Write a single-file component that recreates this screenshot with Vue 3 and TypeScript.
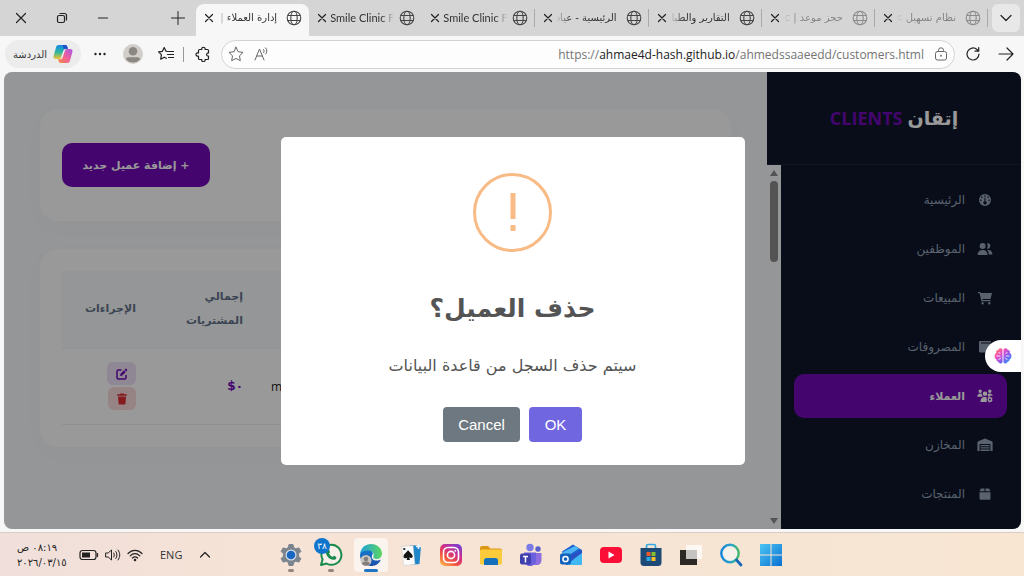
<script setup lang="ts">
interface Tab {
  title: string
  dir: 'rtl' | 'ltr'
  active?: boolean
  faded?: boolean
  divider?: boolean
}

interface NavItem {
  label: string
  path: string
  active?: boolean
}

const tabs: Tab[] = [
  { title: 'إدارة العملاء |', dir: 'rtl', active: true },
  { title: 'Smile Clinic F', dir: 'ltr' },
  { title: 'Smile Clinic F', dir: 'ltr', divider: true },
  { title: 'الرئيسية - عياد', dir: 'rtl', divider: true },
  { title: 'التقارير والطبا', dir: 'rtl', divider: true },
  { title: 'حجز موعد | ic', dir: 'rtl', faded: true, divider: true },
  { title: 'نظام تسهيل >', dir: 'rtl', faded: true, divider: true },
]

const navItems: NavItem[] = [
  {
    label: 'الرئيسية',
    path: 'M8 2a6 6 0 1 0 0 12A6 6 0 0 0 8 2Zm0 1.2a.8.8 0 1 1 0 1.6.8.8 0 0 1 0-1.6ZM4.9 4.4a.8.8 0 1 1 0 1.6.8.8 0 0 1 0-1.6ZM3.9 7.4a.8.8 0 1 1 0 1.6.8.8 0 0 1 0-1.6Zm7.2-3a.8.8 0 1 1 0 1.6.8.8 0 0 1 0-1.6Zm1 3a.8.8 0 1 1 0 1.6.8.8 0 0 1 0-1.6ZM7.5 5.8h1v3.4a1.6 1.6 0 1 1-1 0Z',
  },
  {
    label: 'الموظفين',
    path: 'M5.6 2a3 3 0 1 1 0 6 3 3 0 0 1 0-6ZM.6 14c0-3 1.600-5 5-5s5 2 5 5ZM10.600 2.200a2.700 2.700 0 1 1-.7 5.300 4.300 4.300 0 0 0 .1-4.900ZM10.200 9h1.100c2.700 0 4.100 1.700 4.100 4.600h-3.600c0-2-.5-3.500-1.600-4.600Z',
  },
  {
    label: 'المبيعات',
    path: 'M1 2h2.300l.5 1H15l-1.500 6H5.300l.2 1H13.500v1.300H4.400L2.600 3.300H1ZM5.600 12a1.200 1.200 0 1 1 0 2.400 1.200 1.200 0 0 1 0-2.400ZM12.300 12a1.200 1.200 0 1 1 0 2.400 1.200 1.200 0 0 1 0-2.400Z',
  },
  {
    label: 'المصروفات',
    path: 'M3 2h10a1 1 0 0 1 1 1v.5H4v1h9.500a1.500 1.500 0 0 1 1.500 1.500v6a1.500 1.500 0 0 1-1.500 1.500h-10A1.500 1.500 0 0 1 2 12V3a1 1 0 0 1 1-1Zm9 6a1 1 0 1 0 0 2 1 1 0 0 0 0-2Z',
  },
  {
    label: 'العملاء',
    active: true,
    path: 'M3.200 1.500a1.700 1.700 0 1 1 0 3.400 1.700 1.700 0 0 1 0-3.400ZM12.800 1.500a1.700 1.700 0 1 1 0 3.400 1.700 1.700 0 0 1 0-3.400ZM8 3.500a2.300 2.300 0 1 1 0 4.600 2.300 2.300 0 0 1 0-4.600ZM.3 8.800c0-2 1-3.300 2.900-3.300.7 0 1.300.2 1.700.5 0 1 .3 2 1 2.800ZM10.900 6c.5-.3 1.100-.5 1.900-.5 1.700 0 2.700 1 2.900 2.500l-1.200-.6-1.600.3-.8 1-1.500-.4c.3-.7.4-1.500.300-2.300ZM3.500 14c0-3 1.200-5 4.500-5 .9 0 1.300.1 1.700.3l-.2 1.300.5 1-.5 1.400.6 1ZM12.900 8.500l.6.9 1.100-.2.9 1.300-.5 1 .5 1-.9 1.300-1.100-.1-.6.800-1.400-.8-1-1.700.3-1 .1-1.500ZM12.900 10.500a1 1 0 1 0 0 2 1 1 0 0 0 0-2Z',
  },
  {
    label: 'المخازن',
    path: 'M.4 14V5.400c0-.6.3-1 .8-1.200L8 1.600l6.800 2.600c.5.2.8.6.8 1.200V14h-2.200V7H2.600v7ZM3.500 8h9v1.300h-9ZM3.500 10.200h9v1.300h-9ZM3.500 12.500h9V14h-9Z',
  },
  {
    label: 'المنتجات',
    path: 'M4.500 2.500h3v2.800H2.600l.8-2.100c.2-.5.500-.7 1.100-.7ZM8.500 2.500h3c.6 0 .9.200 1.100.7l.8 2.100H8.500ZM2.500 6.200h11v6.200c0 .8-.4 1.300-1.300 1.300H3.800c-.9 0-1.300-.5-1.300-1.300Z',
  },
]
</script>

<template>
  <div class="desktop">
    <header class="tabstrip">
      <div class="window-controls">
        <button type="button" aria-label="Close window">
          <svg width="12" height="12" viewBox="0 0 12 12"><path d="M1.500 1.500l9 9M10.500 1.500l-9 9" class="ln" /></svg>
        </button>
        <button type="button" aria-label="Restore">
          <svg width="12" height="12" viewBox="0 0 12 12"><rect x="1.500" y="3.500" width="7" height="7" rx="1.500" class="ln" /><path d="M4 1.500h4.500a2 2 0 0 1 2 2V8" class="ln" /></svg>
        </button>
        <button type="button" aria-label="Minimize">
          <svg width="12" height="12" viewBox="0 0 12 12"><path d="M1.500 6h9" class="ln" /></svg>
        </button>
        <button type="button" class="new-tab" aria-label="New tab">
          <svg width="16" height="16" viewBox="0 0 16 16"><path d="M1.500 8h13M8 1.500v13" class="ln thin" /></svg>
        </button>
      </div>
      <nav class="tabs">
        <div v-for="(tab, i) in tabs" :key="i" class="tab" :class="{ active: tab.active, faded: tab.faded, divider: tab.divider }">
          <button type="button" aria-label="Close tab">
            <svg width="10" height="10" viewBox="0 0 10 10"><path d="M1.500 1.500l7 7M8.500 1.500l-7 7" class="ln" /></svg>
          </button>
          <span class="tab-title" :class="tab.dir" :dir="tab.dir">{{ tab.title }}</span>
          <svg class="globe" width="16" height="16" viewBox="0 0 16 16">
            <circle cx="8" cy="8" r="6.800" />
            <ellipse cx="8" cy="8" rx="3.200" ry="6.800" />
            <path d="M1.800 5.500h12.400M1.800 10.500h12.400" />
          </svg>
        </div>
      </nav>
      <button type="button" class="tab-menu" aria-label="Tab actions">
        <svg width="12" height="12" viewBox="0 0 12 12"><path d="M1 3.500l5 5 5-5" class="ln" /></svg>
      </button>
    </header>

    <div class="toolbar">
      <div class="tools">
        <button type="button" class="chat">
          <span dir="rtl">الدردشة</span>
          <svg width="20" height="20" viewBox="0 0 20 20">
            <defs>
              <linearGradient id="cpA" x1="0" y1="0" x2="0" y2="1"><stop offset="0" stop-color="#1488e8" /><stop offset=".5" stop-color="#2bb5a0" /><stop offset="1" stop-color="#f4c430" /></linearGradient>
              <linearGradient id="cpB" x1="1" y1="0" x2="0" y2="1"><stop offset="0" stop-color="#a558e8" /><stop offset=".5" stop-color="#f0609a" /><stop offset="1" stop-color="#f78a3c" /></linearGradient>
            </defs>
            <path d="M6 1h6c1.500 0 2 .8 2.400 2l.5 1.700h-2c-1.600 0-2.300 1-2.700 2.400L8 13.500c-.4 1-1 1.500-2 1.500H3C.8 15 .1 13.500.7 11.500l2.300-8C3.500 1.700 4.400 1 6 1Z" fill="url(#cpA)" />
            <path d="M14 19H8c-1.500 0-2-.8-2.400-2l-.5-1.700h2c1.600 0 2.300-1 2.700-2.400L12 6.500c.4-1 1-1.500 2-1.500h3c2.200 0 2.900 1.500 2.300 3.500l-2.300 8c-.5 1.800-1.400 2.500-3 2.500Z" fill="url(#cpB)" />
            <path d="M9.500 1H12c1.500 0 2 .8 2.400 2l.5 1.700h-2c-1 0-1.600.3-2 .9Z" fill="#1c50c8" />
          </svg>
        </button>
        <button type="button" aria-label="Settings and more">
          <svg width="14" height="14" viewBox="0 0 14 14" fill="#222"><circle cx="2.500" cy="7" r="1.200" /><circle cx="7" cy="7" r="1.200" /><circle cx="11.500" cy="7" r="1.200" /></svg>
        </button>
        <button type="button" aria-label="Profile">
          <svg width="20" height="20" viewBox="0 0 20 20"><circle cx="10" cy="10" r="10" fill="#d2cfcb" /><circle cx="10" cy="7.300" r="4.300" fill="#8b8783" /><path d="M3 15.500c0-1.500 1-2.300 2.500-2.300h9c1.500 0 2.500.8 2.500 2.300a9.500 9.500 0 0 1-14 0Z" fill="#8b8783" /></svg>
        </button>
        <button type="button" aria-label="Favorites">
          <svg width="16" height="16" viewBox="0 0 16 16"><path d="M9.500 5.500L8 5.200 6.200 1.600 4.400 5.300.6 5.900l2.800 2.700-.7 4.600 3.500-2 2.200 1.100M10.500 5.500h5M9.500 8.500h6M10.500 11.500h5" class="ln" /></svg>
        </button>
        <span class="rule"></span>
        <button type="button" class="extensions" aria-label="Extensions">
          <svg width="16" height="16" viewBox="0 0 16 16"><path d="M4.500 3.500h2.300a1.700 1.700 0 1 1 3.200 0h2.500a1 1 0 0 1 1 1V7a1.600 1.600 0 0 0-1 3h1v2.500a1 1 0 0 1-1 1H10a1.700 1.700 0 1 1-3.200 0H4.500a1 1 0 0 1-1-1V10a1.700 1.700 0 1 1 0-3V4.500a1 1 0 0 1 1-1Z" class="ln" /></svg>
        </button>
      </div>
      <div class="address">
        <svg width="16" height="16" viewBox="0 0 16 16"><path d="M8 1.200l2.100 4.500 4.900.7-3.500 3.400.8 4.900L8 12.400l-4.300 2.300.8-4.900L1 6.400l4.900-.7Z" class="ln soft" /></svg>
        <svg width="16" height="16" viewBox="0 0 16 16"><path d="M1 14L5.500 3 10 14M2.700 10h5.600M9.500 3.500c.8.900.8 2.200.2 3.200M11.500 1.800c1.800 1.800 1.700 4.500.3 6.200" class="ln soft" /></svg>
        <div class="url" dir="ltr">https://<b>ahmae4d-hash.github.io</b>/ahmedssaaeedd/customers.html</div>
        <svg width="14" height="14" viewBox="0 0 14 14"><rect x="1.500" y="4.500" width="11" height="8.500" rx="2" class="ln soft" /><path d="M4.500 4.500V3.300a2.500 2.500 0 0 1 5 0v1.200" class="ln soft" /><circle cx="7" cy="8.700" r="1" fill="#777" /></svg>
      </div>
      <button type="button" aria-label="Reload">
        <svg width="16" height="16" viewBox="0 0 16 16"><path d="M14 8a6 6 0 1 1-2-4.500L13.500 5M13.700 1.500V5.200H10" class="ln" /></svg>
      </button>
      <button type="button" aria-label="Forward">
        <svg width="16" height="16" viewBox="0 0 16 16"><path d="M1 8h14M9 2l6 6-6 6" class="ln" /></svg>
      </button>
    </div>

    <div class="viewport">
      <main class="content">
        <section class="card actions-card">
          <button type="button" class="add" dir="rtl">+ إضافة عميل جديد</button>
        </section>
        <section class="card">
          <table>
            <colgroup><col class="c-actions" /><col class="c-total" /><col /></colgroup>
            <thead>
              <tr>
                <th dir="rtl">الإجراءات</th>
                <th dir="rtl">إجمالي<br />المشتريات</th>
                <th></th>
              </tr>
            </thead>
            <tbody>
              <tr>
                <td>
                  <div class="row-actions">
                    <button type="button" class="edit" aria-label="تعديل">
                      <svg width="12" height="12" viewBox="0 0 12 12"><path d="M5 2H2.500A1.500 1.500 0 0 0 1 3.500v6A1.500 1.500 0 0 0 2.500 11h6A1.500 1.500 0 0 0 10 9.500V7.500" fill="none" stroke="currentColor" stroke-width="1.500" stroke-linecap="round" /><path d="M9 1.200c.6-.6 1.200-.6 1.800 0s.6 1.200 0 1.800L10.300 3.500 8.500 1.700ZM8 2.200L9.800 4 6.300 7.500 4 8l.5-2.300Z" fill="currentColor" /></svg>
                    </button>
                    <button type="button" class="delete" aria-label="حذف">
                      <svg width="12" height="12" viewBox="0 0 12 12"><path d="M4.300.5h3.400l.5.8h2.600v1.500H1.200V1.300h2.600ZM2 3.500h8l-.5 7c-.1.600-.4 1-1 1h-5c-.6 0-.9-.4-1-1Z" fill="currentColor" /></svg>
                    </button>
                  </div>
                </td>
                <td class="total">$٠</td>
                <td class="mail">m</td>
              </tr>
            </tbody>
          </table>
        </section>
      </main>

      <aside class="sidebar">
        <h2 class="brand" dir="rtl">إتقان <span>CLIENTS</span></h2>
        <div class="menu">
          <div class="scrollbar">
            <i class="up"></i>
            <i class="thumb"></i>
            <i class="down"></i>
          </div>
          <nav dir="rtl">
            <a v-for="item in navItems" :key="item.label" href="#" :class="{ active: item.active }">
              <svg width="16" height="16" viewBox="0 0 16 16"><path :d="item.path" fill="currentColor" fill-rule="evenodd" /></svg>
              <span>{{ item.label }}</span>
            </a>
          </nav>
        </div>
      </aside>

      <div class="overlay">
        <div class="modal" role="dialog" aria-labelledby="dlg-title">
          <div class="warn"><svg width="10" height="40" viewBox="0 0 10 40"><path d="M2.500 1h5v26h-5ZM2.500 33h5v6h-5Z" fill="#f8bb86" /></svg></div>
          <h1 id="dlg-title" dir="rtl">حذف العميل؟</h1>
          <p dir="rtl">سيتم حذف السجل من قاعدة البيانات</p>
          <div class="choices">
            <button type="button" class="cancel">Cancel</button>
            <button type="button" class="ok">OK</button>
          </div>
        </div>
      </div>

      <button type="button" class="assistant" aria-label="Assistant">
        <svg width="18" height="18" viewBox="0 0 18 18">
          <defs><linearGradient id="brain" x1="0" y1="0" x2="1" y2="1"><stop offset="0" stop-color="#ff8a4c" /><stop offset=".35" stop-color="#ef4fc4" /><stop offset=".65" stop-color="#7a5cf0" /><stop offset="1" stop-color="#16b4f5" /></linearGradient></defs>
          <path d="M8.500 2.500C7.500.6 4.800.8 4.300 2.800 2.500 3 1.700 4.500 2.200 6 .8 6.700.4 8 .7 9.200c-.3 1.500.3 2.600 1.600 3.100 0 1.500 1 2.500 2.300 2.600.7 2.100 3.100 2.200 3.900.6ZM9.500 2.500c1-1.900 3.700-1.700 4.200.3 1.800.2 2.600 1.700 2.100 3.200 1.400.7 1.800 2 1.500 3.200.3 1.500-.3 2.600-1.600 3.100 0 1.500-1 2.500-2.300 2.600-.7 2.100-3.100 2.200-3.900.6Z" fill="url(#brain)" />
          <path d="M4.500 5.500c1 0 1.500.6 1.500 1.500M2.500 9h3.800M5 13c0-1.200.8-1.800 2-1.800M13.500 5.500C12.500 5.500 12 6.100 12 7M15.500 9h-3.800M13 13c0-1.200-.8-1.800-2-1.800" fill="none" stroke="#fff" stroke-width=".8" />
        </svg>
      </button>
    </div>

    <footer class="taskbar">
      <div class="tray">
        <div class="clock"><span dir="rtl">٠٨:١٩ ص</span><span dir="rtl">٢٠٢٦/٠٣/١٥</span></div>
        <svg class="battery" width="20" height="12" viewBox="0 0 20 12"><rect x="1" y="1.500" width="16" height="9" rx="2.500" class="ln" /><rect x="3" y="3.500" width="8" height="5" fill="#222" /><path d="M18.500 4.500v3" class="ln" /></svg>
        <svg class="sound" width="16" height="14" viewBox="0 0 16 14"><path d="M1 5h2.200L6.500 2v10L3.200 9H1ZM8.700 5c.8 1.200.8 2.800 0 4M10.800 3.500c1.600 2 1.600 5 0 7M13 2c2.400 3 2.400 7 0 10" class="ln thin" /></svg>
        <svg class="wifi" width="16" height="14" viewBox="0 0 16 14"><path d="M1 5.500c4-4.200 10-4.200 14 0M3.200 7.800c2.800-2.900 6.800-2.900 9.600 0M5.400 10c1.600-1.600 3.600-1.600 5.200 0" class="ln" /><circle cx="8" cy="12" r="1.300" fill="#222" /></svg>
        <span class="lang">ENG</span>
        <svg class="chev" width="12" height="12" viewBox="0 0 12 12"><path d="M1.500 8l4.500-4.500L10.500 8" class="ln" /></svg>
      </div>
      <div class="apps">
        <button type="button" class="running" aria-label="Settings">
          <svg width="24" height="24" viewBox="0 0 24 24"><path d="M10 1.500h4l.8 3.200 2 1.100 3.100-.9 2 3.500-2.300 2.300v2.600l2.300 2.300-2 3.500-3.100-.9-2 1.100-.8 3.200h-4l-.8-3.200-2-1.100-3.100.9-2-3.500 2.300-2.300v-2.600L2.100 8.400l2-3.500 3.100.9 2-1.100Z" fill="#7b848d" stroke="#7b848d" stroke-linejoin="round" /><circle cx="12" cy="12" r="5.500" fill="#d5dfe8" /><circle cx="12" cy="12" r="4.300" fill="#1766c0" /></svg>
        </button>
        <button type="button" class="running" aria-label="WhatsApp">
          <svg width="24" height="24" viewBox="0 0 24 24"><path d="M2 22l1.600-5.500A10 10 0 1 1 7.500 20.500Z" fill="#f7efe8" stroke="#178a4c" stroke-width="2" stroke-linejoin="round" /><path d="M8.500 6.500l1.700.2.900 2.500-1.100 1.400c.8 1.600 1.900 2.600 3.500 3.400l1.400-1.200 2.400 1.100c.2 2-1.200 3-3 2.900-4-.6-7-3.600-7.400-7.400 0-1.300.5-2.300 1.600-2.900Z" fill="#178a4c" /></svg>
          <span class="badge">٣٨</span>
        </button>
        <button type="button" class="running current" aria-label="Edge">
          <svg width="24" height="24" viewBox="0 0 24 24">
            <defs>
              <linearGradient id="edgeA" x1="0" y1="0" x2="1" y2="0"><stop offset="0" stop-color="#1e9fe0" /><stop offset="1" stop-color="#5bd660" /></linearGradient>
              <linearGradient id="edgeB" x1="0" y1="0" x2="0" y2="1"><stop offset="0" stop-color="#1479cf" /><stop offset="1" stop-color="#1b4fa8" /></linearGradient>
            </defs>
            <path d="M1 12C2 6.500 6 5 10 6.500c3 1 4.500 3 3.500 5-1.500 2.500-.5 5.500 3 6 2 .3 4-.2 5.500-1C20 21 16.500 23 12 23 5.500 23 1 18 1 12Z" fill="url(#edgeB)" />
            <path d="M1 11C2 4.500 6.500 1 12 1c6.500 0 11 4.500 11 9.500 0 3.500-2.500 5.500-5.500 5.500-2.500 0-4-1-3-2.500C15.500 10 13 7.500 9.500 7.500 5.500 7.500 2 9 1 11Z" fill="url(#edgeA)" />
            <circle cx="7" cy="17.500" r="5.500" fill="#c9c5c1" /><circle cx="7" cy="16" r="2.300" fill="#827e7b" /><path d="M3 21c.5-2 2-2.500 4-2.500s3.500.5 4 2.500a5.500 5.500 0 0 1-8 0Z" fill="#827e7b" />
          </svg>
        </button>
        <button type="button" aria-label="Solitaire">
          <svg width="24" height="24" viewBox="0 0 24 24"><path d="M11 2l11 1-1.500 18L11 22Z" fill="#1f86c9" /><path d="M17 3.500h5M19.500 1v5" stroke="#e9f6ff" stroke-width="1.500" /><path d="M2.500 3.500L14 2.500l2 19-11.500 1Z" fill="#fbfbfb" stroke="#c9c6c3" stroke-width=".5" /><path d="M9 7c1.200 2.200 4.500 3.700 4.700 6 .1 1.800-2 2.600-3.600 1.300l.9 2.700H7.700l.5-2.600c-1.400 1.500-3.700.9-3.700-.9C4.500 11.200 7.800 9.500 9 7Z" fill="#151515" /><path d="M4.300 5h2v2h-2Z" fill="#333" /></svg>
        </button>
        <button type="button" aria-label="Instagram">
          <svg width="24" height="24" viewBox="0 0 24 24"><defs><linearGradient id="ig" x1=".1" y1="1" x2=".8" y2="0"><stop offset="0" stop-color="#fdb84a" /><stop offset=".35" stop-color="#f2503f" /><stop offset=".65" stop-color="#cc2f8d" /><stop offset="1" stop-color="#7a3fd0" /></linearGradient></defs><rect x="1" y="1" width="22" height="22" rx="5" fill="url(#ig)" /><rect x="4.500" y="4.500" width="15" height="15" rx="4.500" fill="none" stroke="#fff" stroke-width="1.600" /><circle cx="12" cy="12" r="3.600" fill="none" stroke="#fff" stroke-width="1.600" /><circle cx="16.300" cy="7.700" r="1" fill="#fff" /></svg>
        </button>
        <button type="button" aria-label="File Explorer">
          <svg width="24" height="24" viewBox="0 0 24 24"><path d="M1 5a2 2 0 0 1 2-2h6l2.500 2.500H21a2 2 0 0 1 2 2V10H1Z" fill="#dc9716" /><rect x="1" y="6.500" width="22" height="15" rx="1.500" fill="#fccb3c" /><path d="M5 22v-4.500A2.500 2.500 0 0 1 7.500 15h9a2.500 2.500 0 0 1 2.500 2.500V22Z" fill="#1671bd" /></svg>
        </button>
        <button type="button" aria-label="Teams">
          <svg width="24" height="24" viewBox="0 0 24 24"><circle cx="11" cy="4.500" r="3.700" fill="#7a7be8" /><circle cx="19" cy="6" r="2.700" fill="#5a5fd0" /><path d="M14 10h8.500v7c0 3-2 5-4.500 5h-4Z" fill="#8f6fe0" /><path d="M5 9.500h12V17c0 3.500-2.500 6-6 6s-6-2.500-6-6Z" fill="#6a5fdc" /><rect x="1" y="10.500" width="11" height="11" rx="2" fill="#3f3fae" /><path d="M4 13.500h5M6.500 13.500v6" stroke="#fff" stroke-width="1.500" /></svg>
        </button>
        <button type="button" aria-label="Outlook">
          <svg width="24" height="24" viewBox="0 0 24 24"><path d="M3 8.500L14 1.500l9 5.500v13a2 2 0 0 1-2 2H7Z" fill="#1d63cf" /><path d="M3 9.500L16 3l4 2.500L7 14Z" fill="#4fb4f4" /><path d="M23 9v11a2 2 0 0 1-2 2H8Z" fill="#41b8f2" /><path d="M7 14l16-6.500V10L10 19Z" fill="#2a50c4" /><rect x="1" y="10.500" width="11" height="11" rx="2" fill="#1261bd" /><circle cx="6.500" cy="16" r="2.600" fill="none" stroke="#fff" stroke-width="1.500" /></svg>
        </button>
        <button type="button" aria-label="YouTube">
          <svg width="24" height="24" viewBox="0 0 24 24"><rect x="1" y="4" width="22" height="16" rx="4" fill="#fb0f37" /><path d="M9.500 8.500l6 3.500-6 3.500Z" fill="#fff" /></svg>
        </button>
        <button type="button" aria-label="Store">
          <svg width="24" height="24" viewBox="0 0 24 24"><path d="M7.500 6V3a1.500 1.500 0 0 1 1.500-1.500h6A1.500 1.500 0 0 1 16.500 3v3" fill="none" stroke="#35a9de" stroke-width="1.700" /><path d="M1.500 5h21v14.500a3.500 3.500 0 0 1-3.500 3.500H5a3.500 3.500 0 0 1-3.500-3.500Z" fill="#1d4a77" /><path d="M7.500 9h4v4h-4Z" fill="#ec5a2c" /><path d="M12.500 9h4v4h-4Z" fill="#86bd2f" /><path d="M7.500 14h4v4h-4Z" fill="#2ca7e6" /><path d="M12.500 14h4v4h-4Z" fill="#fbbd23" /></svg>
        </button>
        <button type="button" aria-label="Task view">
          <svg width="24" height="24" viewBox="0 0 24 24"><rect x="1" y="7" width="17" height="15" fill="#2b2926" /><rect x="7" y="2" width="16" height="14" fill="#fff" opacity=".72" /></svg>
        </button>
        <button type="button" aria-label="Search">
          <svg width="24" height="24" viewBox="0 0 24 24"><defs><linearGradient id="sr" x1="0" y1="0" x2="1" y2="0"><stop offset="0" stop-color="#1683d8" /><stop offset=".6" stop-color="#2aa6c4" /><stop offset="1" stop-color="#45b86a" /></linearGradient></defs><circle cx="11" cy="10.500" r="8.700" fill="#f5f1ea" stroke="url(#sr)" stroke-width="2.400" /><path d="M17.500 17l4.500 5" stroke="#1566b5" stroke-width="2.800" stroke-linecap="round" /></svg>
        </button>
        <button type="button" aria-label="Start">
          <svg width="24" height="24" viewBox="0 0 24 24"><defs><linearGradient id="win" gradientUnits="userSpaceOnUse" x1="1" y1="1" x2="23" y2="23"><stop offset="0" stop-color="#4cc5f5" /><stop offset="1" stop-color="#0a70cf" /></linearGradient></defs><path d="M1 1h10.500v10.500H1ZM12.500 1H23v10.500H12.500ZM1 12.500h10.500V23H1ZM12.500 12.500H23V23H12.500Z" fill="url(#win)" /></svg>
        </button>
      </div>
    </footer>
  </div>
</template>

<style>
html,
body {
  margin: 0;
  height: 100%;
}
</style>

<style scoped>
* {
  box-sizing: border-box;
}
button {
  border: 0;
  padding: 0;
  background: none;
  font: inherit;
  color: inherit;
  display: inline-flex;
  align-items: center;
  justify-content: center;
}
svg {
  flex: none;
  display: block;
}
.ln {
  fill: none;
  stroke: #222;
  stroke-width: 1.2;
  stroke-linecap: round;
  stroke-linejoin: round;
}
.ln.thin {
  stroke-width: 1;
}
.ln.soft {
  stroke: #666;
  stroke-width: 1;
}
.desktop {
  min-height: 100vh;
  display: flex;
  flex-direction: column;
  background: #f7f7f7;
  color: #333;
  font-family: "Open Sans", "DejaVu Sans", sans-serif;
  font-size: 12px;
}

/* Tab strip */
.tabstrip {
  display: flex;
  height: 36px;
  background: #d5d5d5;
}
.window-controls {
  display: flex;
  flex: none;
  width: 196px;
}
.window-controls button {
  width: 41px;
}
.window-controls .new-tab {
  margin-left: auto;
  width: 37px;
}
.tabs {
  flex: 1;
  min-width: 0;
  display: flex;
}
.tab {
  position: relative;
  flex: 1;
  min-width: 0;
  display: flex;
  align-items: center;
  gap: 3px;
  padding: 0 7px 0 8px;
}
.tab.active {
  margin-top: 4px;
  padding-bottom: 4px;
  background: #f7f7f7;
  border-radius: 8px 8px 0 0;
}
.tab.divider::after {
  content: "";
  position: absolute;
  right: 0;
  top: 9px;
  width: 1px;
  height: 18px;
  background: #a9a9a9;
}
.tab-title {
  flex: 1;
  min-width: 0;
  margin-right: 2px;
  white-space: nowrap;
  line-height: 20px;
}
.tab-title.ltr {
  font-family: Lato, sans-serif;
  font-size: 11px;
  mask-image: linear-gradient(to left, transparent, #000 12px);
}
.tab-title.rtl {
  padding-right: 4px;
  font-family: "DejaVu Sans", sans-serif;
  font-size: 10px;
  mask-image: linear-gradient(to right, transparent, #000 14px);
}
.globe {
  fill: none;
  stroke: #444;
  stroke-width: 1.1;
}
.tab.faded .tab-title,
.tab.faded .globe {
  opacity: 0.5;
}
.tab-menu {
  width: 28px;
  height: 28px;
  margin: 4px 4px 0 4px;
  border-radius: 6px;
  background: #e8e8e8;
}

/* Toolbar */
.toolbar {
  display: flex;
  align-items: center;
  height: 36px;
  padding-right: 10px;
  gap: 10px;
}
.toolbar > button {
  width: 16px;
}
.toolbar > button:last-child {
  margin-left: 7px;
}
.tools {
  flex: none;
  width: 211px;
  display: flex;
  align-items: center;
  padding-left: 5px;
}
.tools > button {
  flex: none;
  width: 33px;
}
.tools > .chat {
  width: 76px;
  height: 28px;
  gap: 6px;
  margin-right: 2px;
  border-radius: 14px;
  background: #ececec;
  font-size: 10px;
}
.tools > .extensions {
  width: 16px;
}
.rule {
  width: 1px;
  height: 15px;
  margin: 0 11px 0 1px;
  background: #999;
}
.address {
  flex: 1;
  min-width: 0;
  display: flex;
  align-items: center;
  gap: 10px;
  height: 29px;
  padding: 0 6px;
  border: 1px solid #d3d3d3;
  border-radius: 15px;
  background: #fdfdfd;
}
.url {
  flex: 1;
  min-width: 0;
  text-align: right;
  font-size: 12px;
  white-space: nowrap;
  color: #757575;
}
.url b {
  font-weight: 400;
  color: #222;
}

/* Page */
.viewport {
  position: relative;
  flex: 1;
  display: flex;
  margin: 0 3px 3px 4px;
  border-radius: 8px;
  overflow: hidden;
  background: #f8fafc;
  font-family: "DejaVu Sans", sans-serif;
}
.content {
  flex: 1;
  min-width: 0;
  padding: 37px 36px;
  display: flex;
  flex-direction: column;
  gap: 28px;
}
.card {
  padding: 22px;
  border-radius: 18px;
  background: #fff;
  box-shadow: 0 6px 24px rgba(15, 23, 42, 0.02);
}
.actions-card {
  padding: 34px 22px;
}
.add {
  width: 148px;
  height: 44px;
  border-radius: 10px;
  background: #7209b7;
  color: #fff;
  font-size: 11px;
  font-weight: 700;
}
table {
  width: 100%;
  table-layout: fixed;
  border-collapse: collapse;
}
.c-actions {
  width: 98px;
}
.c-total {
  width: 107px;
}
th {
  height: 77px;
  padding: 0 24px 0 0;
  background: #f8fafc;
  border-bottom: 1px solid #f1f5f9;
  color: #64748b;
  font-size: 11px;
  font-weight: 700;
  line-height: 24px;
  text-align: right;
  white-space: nowrap;
}
td {
  height: 76px;
  padding: 0 24px 0 0;
  border-bottom: 1px solid #eef1f5;
  text-align: right;
}
.row-actions {
  display: flex;
  flex-direction: column;
  align-items: flex-end;
  gap: 2px;
}
.row-actions button {
  height: 23px;
  border-radius: 6px;
}
.edit {
  width: 29px;
  background: #efe2f7;
  color: #7209b7;
}
.delete {
  width: 28px;
  background: #fbdcdc;
  color: #e02f35;
}
td.total {
  color: #7209b7;
  font-size: 12px;
  font-weight: 700;
}
td.mail {
  padding: 0 0 0 4px;
  text-align: left;
  color: #1e1e1e;
  font-family: "Open Sans", sans-serif;
  font-size: 12px;
}

.sidebar {
  flex: none;
  width: 254px;
  display: flex;
  flex-direction: column;
}
.brand {
  height: 93px;
  margin: 0;
  display: flex;
  align-items: center;
  justify-content: center;
  gap: 5px;
  border-bottom: 1px solid #1b2436;
  background: #0f172a;
  color: #fff;
  font-size: 19px;
  font-weight: 700;
}
.brand span {
  color: #7209b7;
  font-family: "Open Sans", sans-serif;
  font-weight: 700;
  font-size: 18px;
}
.menu {
  flex: 1;
  display: flex;
}
.scrollbar {
  width: 14px;
  display: flex;
  flex-direction: column;
  align-items: center;
  padding: 5px 0;
}
.scrollbar i {
  border: 4px solid transparent;
}
.scrollbar .up {
  border-top: 0;
  border-bottom: 6px solid #8b8b8b;
}
.scrollbar .thumb {
  width: 8px;
  height: 81px;
  margin: 5px 0 auto;
  border: 0;
  border-radius: 4px;
  background: #8b8b8b;
}
.scrollbar .down {
  border-bottom: 0;
  border-top: 6px solid #8b8b8b;
}
.menu nav {
  flex: 1;
  display: flex;
  flex-direction: column;
  gap: 5px;
  padding: 13px 14px 13px 13px;
  background: #0f172a;
}
.menu a {
  display: flex;
  align-items: center;
  gap: 12px;
  height: 44px;
  padding: 0 14px;
  border-radius: 10px;
  color: #94a3b8;
  font-size: 12px;
  text-decoration: none;
}
.menu a.active {
  background: #7209b7;
  color: #fff;
  font-size: 11px;
  font-weight: 700;
}

.overlay {
  position: absolute;
  inset: 0;
  display: flex;
  align-items: center;
  justify-content: center;
  background: rgba(0, 0, 0, 0.4);
}
.modal {
  width: 464px;
  display: flex;
  flex-direction: column;
  align-items: center;
  padding: 36px 20px 23px;
  border-radius: 5px;
  background: #fff;
}
.warn {
  width: 79px;
  height: 79px;
  display: flex;
  align-items: center;
  justify-content: center;
  border: 3px solid #f8bb86;
  border-radius: 50%;
}
.modal h1 {
  margin: 31px 0 0;
  color: #545454;
  font-size: 25px;
  line-height: 52px;
}
.modal p {
  margin: 14px 0 0;
  color: #545454;
  font-size: 16px;
  line-height: 34px;
}
.choices {
  display: flex;
  gap: 9px;
  margin-top: 24px;
}
.choices button {
  height: 35px;
  border-radius: 4px;
  color: #fff;
  font-family: "Liberation Sans", sans-serif;
  font-size: 15px;
}
.cancel {
  width: 77px;
  background: #6e7881;
}
.ok {
  width: 53px;
  background: #7066e0;
}
.assistant {
  position: absolute;
  right: 0;
  top: 268px;
  width: 36px;
  height: 32px;
  border-radius: 16px 0 0 16px;
  background: #fff;
}

/* Taskbar */
.taskbar {
  display: flex;
  height: 44px;
  border-top: 1px solid #d9cdc6;
  background: linear-gradient(to right, #f0dfdb, #f6e3d6 25%, #f8e6d3);
}
.tray {
  flex: none;
  width: 274px;
  display: flex;
  align-items: center;
  padding-left: 17px;
}
.clock {
  width: 62px;
  display: flex;
  flex-direction: column;
  align-items: flex-start;
  font-family: "DejaVu Sans", sans-serif;
  font-size: 10px;
  line-height: 15px;
  color: #222;
}
.sound {
  margin-left: 6px;
}
.wifi {
  margin-left: 6px;
}
.lang {
  margin-left: 17px;
  font-size: 11px;
}
.chev {
  margin-left: 17px;
}
.apps {
  display: flex;
  align-items: center;
  gap: 6px;
}
.apps button {
  position: relative;
  width: 34px;
  height: 34px;
  border-radius: 4px;
}
.apps .current {
  background: #fbf4ee;
}
.apps .running::after {
  content: "";
  position: absolute;
  left: 14px;
  bottom: 0;
  width: 6px;
  height: 3px;
  border-radius: 2px;
  background: #938781;
}
.apps .current::after {
  left: 10px;
  width: 14px;
  background: #1c76c5;
}
.badge {
  position: absolute;
  left: 0;
  top: 0;
  width: 16px;
  height: 16px;
  border-radius: 50%;
  background: #0e74cc;
  color: #fff;
  font-family: "DejaVu Sans", sans-serif;
  font-size: 9px;
  line-height: 16px;
}
</style>
